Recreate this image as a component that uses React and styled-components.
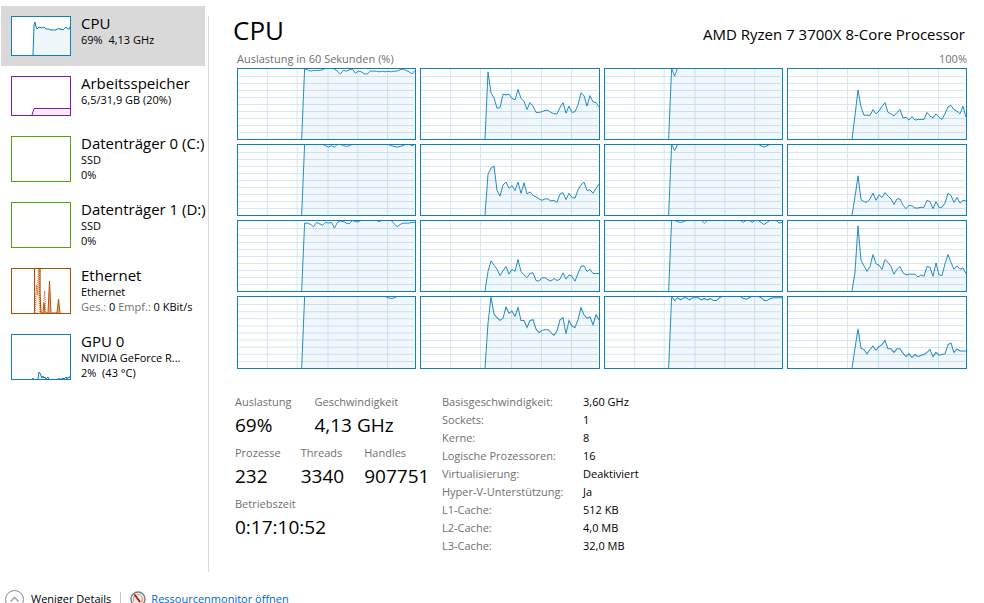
import React from 'react'
import styled, { createGlobalStyle } from 'styled-components'

const GlobalStyle = createGlobalStyle`
  *{
    box-sizing: border-box;
  }
  body{
    margin: 0;
    background: #fff;
    color: #000;
    font-family: 'Open Sans', 'Noto Sans', sans-serif;
    font-size: 11px;
    line-height: 18px;
  }
  button{
    font: inherit;
    color: inherit;
    border: 0;
    padding: 0;
    background: none;
  }
  dl, dt, dd, h1, h2, p{
    margin: 0;
    font-weight: 400;
  }
`

const Page = styled.div`
  display: flex;
  flex-direction: column;
  height: 100vh;
  overflow: hidden;
`

const Content = styled.div`
  display: flex;
  flex: none;
  padding-top: 6px;
`

const Sidebar = styled.nav`
  display: flex;
  flex-direction: column;
  flex: none;
  width: 208px;
  padding: 0 3px 0 1px;
`

const Item = styled.button`
  display: flex;
  align-items: flex-start;
  gap: 10px;
  padding: 10px 0 10px 10px;
  text-align: left;
  white-space: nowrap;
  background: ${({ $active }) => ($active ? '#d9d9d9' : 'transparent')};
`

const Thumb = styled.span`
  flex: none;
  width: 60px;
  height: ${({ $tall }) => ($tall ? '46px' : '40px')};
  border: 1px solid ${({ $color }) => $color};
  background: #fff;
  svg{
    display: block;
  }
`

const ItemText = styled.span`
  display: flex;
  flex-direction: column;
  height: ${({ $tall }) => ($tall ? '46px' : '40px')};
  line-height: 15px;
`

const ItemTitle = styled.span`
  margin-bottom: 2px;
  font-size: 15px;
  line-height: 14px;
`

const Muted = styled.span`
  color: #707070;
`

const Divider = styled.div`
  flex: none;
  width: 1px;
  margin-top: 10px;
  background: #d9d9d9;
`

const Main = styled.main`
  flex: 1;
  min-width: 0;
  padding: 4px 17px 17px 26px;
`

const Header = styled.header`
  display: flex;
  justify-content: space-between;
  align-items: baseline;
  height: 40px;
  padding-right: 2px;
  line-height: 40px;
`

const Title = styled.h1`
  margin-left: -2px;
  font-size: 26px;
`

const Model = styled.h2`
  font-size: 15px;
`

const Caption = styled.div`
  display: flex;
  justify-content: space-between;
  padding-left: 2px;
  color: #707070;
`

const Charts = styled.div`
  display: grid;
  grid-template-columns: 179fr 180fr 179fr 180fr;
  grid-template-rows: 72px 72px 72px 73px;
  gap: 4px;
  padding-left: 2px;
`

const ChartBox = styled.div`
  min-width: 0;
  border: 1px solid #117dbb;
  svg{
    display: block;
    width: 100%;
    height: 100%;
  }
`

const Details = styled.div`
  display: flex;
  margin-top: 24px;
`

const Stats = styled.div`
  flex: none;
  width: 207px;
`

const StatRow = styled.dl`
  display: flex;
  gap: ${({ $wide }) => ($wide ? '23px' : '20px')};
  height: 51px;
  white-space: nowrap;
  dt{
    color: #707070;
  }
  dd{
    font-size: 19px;
    line-height: 28px;
  }
`

const Facts = styled.dl`
  display: grid;
  grid-template-columns: 141px auto;
  dt{
    color: #707070;
  }
`

const Footer = styled.footer`
  display: flex;
  flex: none;
  align-items: center;
  gap: 9px;
  margin-top: 14px;
  padding-left: 5px;
  height: 26px;
`

const FooterButton = styled.button`
  display: flex;
  align-items: center;
  gap: 7px;
`

const FooterLine = styled.span`
  width: 1px;
  height: 14px;
  background: #c8c8c8;
`

const FooterLink = styled.a`
  display: flex;
  align-items: center;
  gap: 5px;
  color: #0066cc;
  text-decoration: none;
`

// a core at full load, with only the samples that dip below it listed
const busy = (dips) =>
  Array.from({ length: 39 }, (_, i) => (i === 0 ? 0 : dips[i] || 101))

// one sample per second, in percent, the newest one last
const cores = [
  [0, 100, 99, 97, 98, 98, 98, 99, 101, 101, 101, 100, 97, 93, 98, 97, 99, 100, 94, 97, 96, 93, 93, 97, 97, 97, 96, 97, 96, 97, 96, 97, 97, 99, 100, 98, 96, 93, 98],
  [0, 96, 66, 59, 44, 45, 64, 63, 64, 58, 56, 71, 58, 54, 42, 52, 47, 38, 38, 39, 41, 41, 38, 36, 36, 45, 52, 37, 47, 38, 39, 49, 66, 62, 47, 62, 53, 52, 46],
  busy({ 2: 90 }),
  [0, 34, 70, 46, 34, 34, 34, 42, 36, 40, 47, 52, 38, 36, 33, 38, 42, 30, 31, 27, 32, 27, 28, 28, 28, 38, 33, 30, 36, 31, 28, 36, 46, 48, 42, 40, 36, 47, 31],
  busy({ 8: 99, 9: 97, 10: 99, 11: 97, 14: 99, 15: 98, 16: 99, 30: 99, 31: 98, 32: 97, 33: 98, 34: 99, 37: 99 }),
  [0, 58, 67, 70, 35, 27, 43, 47, 38, 42, 35, 47, 31, 46, 30, 33, 28, 26, 23, 21, 23, 23, 20, 21, 18, 30, 32, 22, 31, 25, 24, 36, 43, 47, 35, 36, 31, 38, 44],
  busy({ 2: 92, 31: 99, 32: 97, 33: 99 }),
  [0, 26, 56, 22, 19, 18, 23, 31, 21, 29, 25, 32, 27, 23, 15, 23, 23, 14, 9, 14, 13, 10, 10, 11, 11, 21, 19, 9, 19, 11, 11, 17, 31, 28, 18, 25, 17, 21, 20],
  busy({ 1: 97, 2: 97, 3: 95, 4: 92, 5: 98, 6: 96, 7: 94, 8: 98, 9: 97, 10: 98, 11: 90, 12: 98, 13: 100, 14: 99, 15: 97, 16: 96, 18: 99, 19: 99, 26: 99, 31: 96, 32: 92, 33: 95, 34: 97, 35: 97, 36: 97, 37: 98, 38: 98 }),
  [0, 28, 43, 37, 31, 22, 29, 35, 24, 31, 28, 45, 28, 23, 19, 25, 26, 15, 14, 19, 19, 16, 14, 18, 15, 17, 26, 17, 23, 21, 14, 25, 35, 36, 28, 31, 25, 25, 25],
  busy({ 3: 99, 4: 98, 5: 99, 12: 97, 25: 98, 28: 98, 31: 98, 32: 95, 33: 98, 37: 97, 38: 98 }),
  [0, 27, 93, 44, 36, 28, 35, 52, 39, 37, 31, 45, 41, 35, 24, 31, 35, 26, 23, 24, 24, 24, 20, 23, 21, 35, 34, 21, 40, 23, 22, 39, 52, 41, 31, 36, 31, 33, 25],
  busy({ 29: 99, 30: 98, 31: 99 }),
  [0, 63, 100, 76, 71, 67, 70, 86, 77, 80, 73, 85, 67, 67, 57, 67, 68, 55, 50, 53, 54, 54, 50, 46, 52, 68, 71, 48, 67, 59, 57, 68, 85, 75, 70, 72, 61, 75, 68],
  busy({ 2: 95, 3: 99, 4: 96, 5: 99, 6: 99, 7: 96, 8: 99, 9: 99, 10: 99, 11: 96, 12: 98, 13: 96, 14: 98, 15: 95, 16: 95, 17: 99, 25: 98, 26: 97, 27: 99, 31: 99, 32: 95, 33: 95, 34: 98, 35: 99, 36: 99, 37: 99, 38: 99 }),
  [0, 28, 55, 28, 26, 20, 26, 31, 25, 30, 33, 39, 27, 27, 22, 27, 27, 21, 16, 20, 15, 19, 16, 18, 19, 22, 26, 16, 22, 18, 19, 20, 33, 35, 22, 27, 24, 24, 24],
]

const facts = [
  ['Basisgeschwindigkeit:', '3,60 GHz'],
  ['Sockets:', '1'],
  ['Kerne:', '8'],
  ['Logische Prozessoren:', '16'],
  ['Virtualisierung:', 'Deaktiviert'],
  ['Hyper-V-Unterstützung:', 'Ja'],
  ['L1-Cache:', '512 KB'],
  ['L2-Cache:', '4,0 MB'],
  ['L3-Cache:', '32,0 MB'],
]

const stats = [
  [['Auslastung', '69%'], ['Geschwindigkeit', '4,13 GHz']],
  [['Prozesse', '232'], ['Threads', '3340'], ['Handles', '907751']],
  [['Betriebszeit', '0:17:10:52']],
]

const CoreChart = ({ load }) => {
  const line = load
    .map((value, i) => `${178 - (load.length - 1 - i) * 3},${70 - value * 0.7}`)
    .join(' ')
  return (
    <ChartBox>
      <svg viewBox="0 0 178 70" preserveAspectRatio="none" aria-hidden="true">
        <g stroke="#d4e7f2" shapeRendering="crispEdges">
          {[29.5, 59.5, 90.5, 120.5, 150.5].map((x) => (
            <line key={x} x1={x} y1="0" x2={x} y2="70" />
          ))}
          {[7, 14, 21, 28, 35, 42, 49, 56, 63].map((y) => (
            <line key={y} x1="0" y1={y + 0.5} x2="177" y2={y + 0.5} />
          ))}
        </g>
        <polygon points={`${line} 178,70`} fill="#117dbb" fillOpacity="0.06" />
        <polyline points={line} fill="none" stroke="#117dbb" strokeOpacity="0.9" />
      </svg>
    </ChartBox>
  )
}

const MiniChart = ({ color, tall, line, children }) => (
  <Thumb $color={color} $tall={tall}>
    <svg width="58" height={tall ? 44 : 38} aria-hidden="true">
      {line && (
        <>
          <polygon points={`${line} 58,${tall ? 44 : 38}`} fill={color} fillOpacity="0.07" />
          <polyline points={line} fill="none" stroke={color} />
        </>
      )}
      {children}
    </svg>
  </Thumb>
)

const Device = ({ title, active, tall, color, line, drawing, children }) => (
  <Item type="button" $active={active}>
    <MiniChart color={color} tall={tall} line={line}>{drawing}</MiniChart>
    <ItemText $tall={tall}>
      <ItemTitle>{title}</ItemTitle>
      {children}
    </ItemText>
  </Item>
)

const EthernetLines = () => (
  <g fill="none" stroke="#a74f01">
    <polygon points="22,44 23,0 25,18 27,0 29,44" fill="#a74f01" fillOpacity="0.1" stroke="none" />
    <polyline points="22.5,44 22.5,0" />
    <polyline points="23,44 24.5,16 25.5,26 26.5,0" stroke="#d9622b" strokeDasharray="1 1" />
    <polyline points="27.5,0 27.5,24 28.5,44" stroke="#d9622b" strokeWidth="2" strokeDasharray="1 1" />
    <polyline points="28,0 28,24 29,44 31,44 32,34 33,44 36,44 37.5,12 39,44 45,44 46.5,30 48,44" />
    <polyline points="31,44 32.500,22 34,44" stroke="#d9622b" strokeDasharray="1 1" />
    <polygon points="36,44 37.5,12 39,44 45,44 46.5,30 48,44" fill="#d9622b" fillOpacity="0.6" stroke="none" />
  </g>
)

const App = () => (
  <>
    <GlobalStyle />
    <Page>
      <Content>
        <Sidebar>
          <Device
            title="CPU"
            active
            color="#117dbb"
            line="21,38 22,8 23,5 24,10 25,12 27,10 30,11 32,10 34,12 37,12 38,13 44,13 45,12 47,12 48,11 49,13 50,12 51,13 53,11 54,10 56,12 57,12 58,10"
          >
            <span>69%&nbsp; 4,13 GHz</span>
          </Device>
          <Device title="Arbeitsspeicher" color="#8b12ae" line="20,38 22,31.5 58,31.5">
            <span>6,5/31,9 GB (20%)</span>
          </Device>
          <Device title="Datenträger 0 (C:)" tall color="#4da60c">
            <span>SSD</span>
            <span>0%</span>
          </Device>
          <Device title="Datenträger 1 (D:)" tall color="#4da60c">
            <span>SSD</span>
            <span>0%</span>
          </Device>
          <Device title="Ethernet" tall color="#a74f01" drawing={<EthernetLines />}>
            <span>Ethernet</span>
            <span><Muted>Ges.:</Muted> 0 <Muted>Empf.:</Muted> 0 KBit/s</span>
          </Device>
          <Device
            title="GPU 0"
            tall
            color="#117dbb"
            line="20,44.5 21,43 22,44.5 26,44.5 27,37 28,38 30,43 31,41 32,43 33,42 34,44 36,42 37,44.5 46,44.5 47,43 48,44.5 51,43 52,44 54,42 55,44 56,42 57,43 58,41"
          >
            <span>NVIDIA GeForce R...</span>
            <span>2%&nbsp; (43 °C)</span>
          </Device>
        </Sidebar>
        <Divider />
        <Main>
          <Header>
            <Title>CPU</Title>
            <Model>AMD Ryzen 7 3700X 8-Core Processor</Model>
          </Header>
          <Caption>
            <span>Auslastung in 60 Sekunden (%)</span>
            <span>100%</span>
          </Caption>
          <Charts>
            {cores.map((load, i) => <CoreChart key={i} load={load} />)}
          </Charts>
          <Details>
            <Stats>
              {stats.map((row) => (
                <StatRow key={row[0][0]} $wide={row.length === 2}>
                  {row.map(([label, value]) => (
                    <div key={label}>
                      <dt>{label}</dt>
                      <dd>{value}</dd>
                    </div>
                  ))}
                </StatRow>
              ))}
            </Stats>
            <Facts>
              {facts.map(([label, value]) => (
                <React.Fragment key={label}>
                  <dt>{label}</dt>
                  <dd>{value}</dd>
                </React.Fragment>
              ))}
            </Facts>
          </Details>
        </Main>
      </Content>
      <Footer>
        <FooterButton type="button">
          <svg width="19" height="19" viewBox="0 0 19 19" fill="none" aria-hidden="true">
            <circle cx="9.5" cy="9.5" r="9" stroke="#8a8a8a" />
            <path d="M5.5 11.5l4-4 4 4" stroke="#a0a0a0" strokeWidth="1.5" />
          </svg>
          Weniger Details
        </FooterButton>
        <FooterLine />
        <FooterLink href="#">
          <svg width="16" height="16" viewBox="0 0 16 16" fill="none" aria-hidden="true">
            <circle cx="8" cy="8" r="7" fill="#f2f0ee" stroke="#808080" strokeWidth="1.5" />
            <path d="M4 10.5a5 5 0 0 1 1-6.500" stroke="#b0a8a0" />
            <path d="M7 3.500a4.500 4.500 0 0 1 5 3" stroke="#b0a8a0" />
            <path d="M12 6.500a4.500 4.500 0 0 1-1 5" stroke="#e08030" />
            <path d="M4.500 3.500l5.500 7.500" stroke="#d01010" strokeWidth="2" />
          </svg>
          Ressourcenmonitor öffnen
        </FooterLink>
      </Footer>
    </Page>
  </>
)

export default App
